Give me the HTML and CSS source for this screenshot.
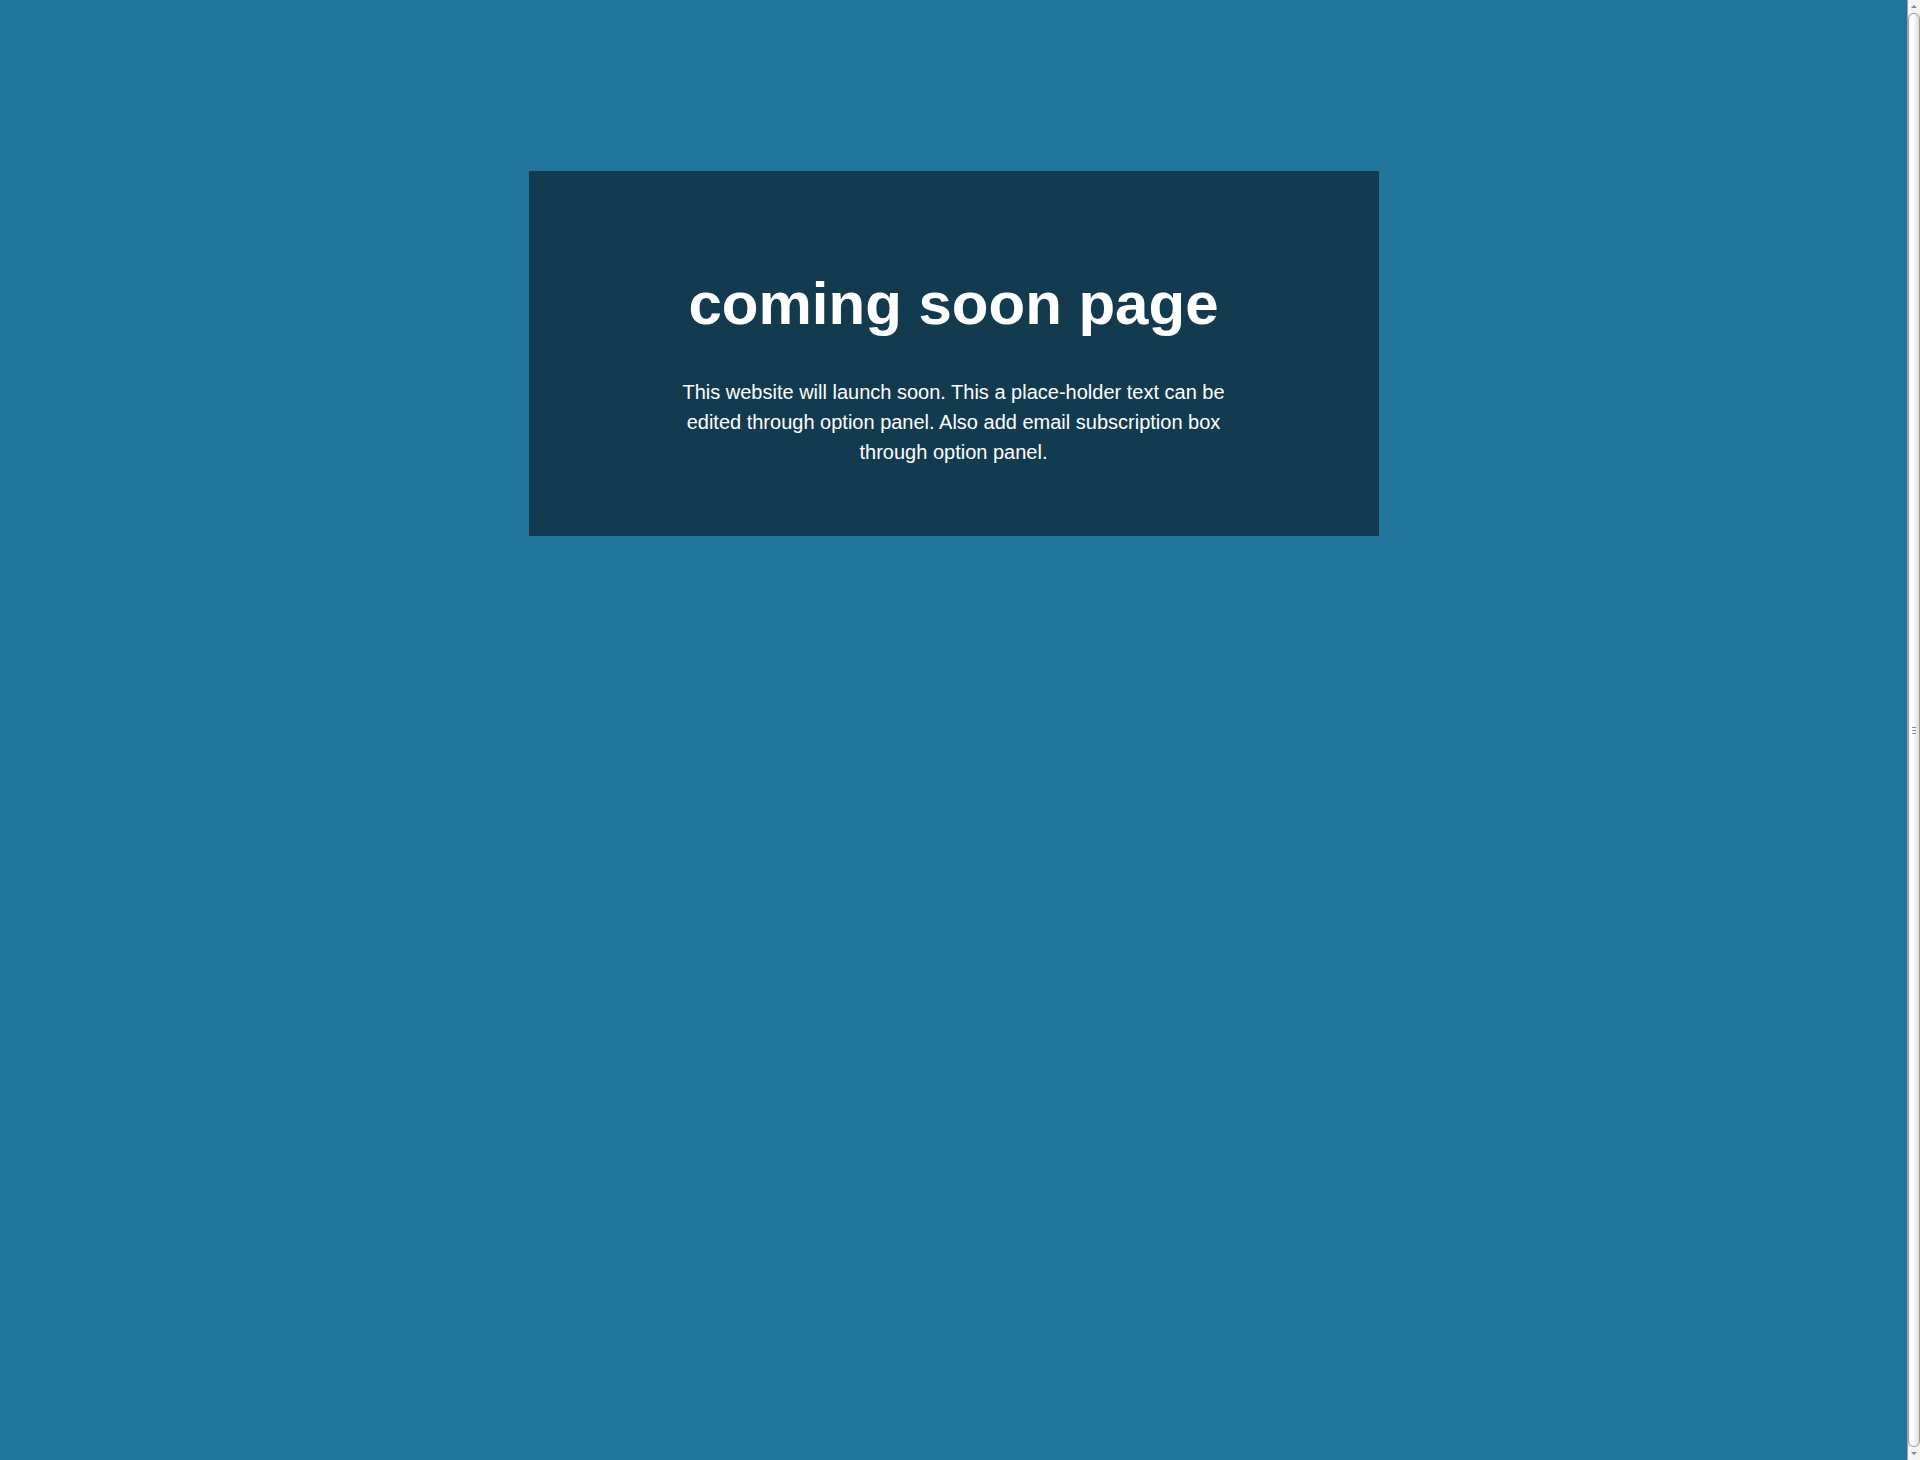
FILE: index.html
```html
<!DOCTYPE html>
<html lang="en">
<head>
<meta charset="utf-8">
<title>Coming soon</title>
<link rel="stylesheet" href="styles.css">
</head>
<body>
<main class="page">
  <section class="notice">
    <h1 class="notice-title">coming soon page</h1>
    <p class="notice-text">This website will launch soon. This a place-holder text can be edited through option panel. Also add email subscription box through option panel.</p>
  </section>
</main>
<div class="scrollbar" aria-hidden="true">
  <div class="sb-btn sb-up"><span class="sb-arrow-up"></span></div>
  <div class="sb-thumb"><span class="sb-grip"></span></div>
  <div class="sb-btn sb-down"><span class="sb-arrow-down"></span></div>
</div>
</body>
</html>
```

FILE: styles.css
```css
html {
  background: #21759b;
}
body {
  margin: 0;
  height: 100vh;
  overflow: hidden;
  display: flex;
  font-family: "Liberation Sans", Arial, sans-serif;
  color: #ffffff;
}
.page {
  flex: 1;
  display: flex;
  justify-content: center;
  align-items: flex-start;
  padding-top: 171px;
}
.notice {
  width: 850px;
  box-sizing: border-box;
  background: #123b50;
  padding: 97px 0 69px;
  display: flex;
  flex-direction: column;
  align-items: center;
  text-align: center;
}
.notice-title {
  margin: 0;
  font-size: 60px;
  line-height: 72px;
  font-weight: bold;
}
.notice-text {
  margin: 37px 0 0;
  width: 580px;
  font-size: 20px;
  line-height: 30px;
}
.scrollbar {
  width: 13px;
  height: 100vh;
  box-sizing: border-box;
  background: #ececec;
  border-left: 1px solid #a0a0a0;
  display: flex;
  flex-direction: column;
}
.sb-btn {
  height: 13px;
  flex: none;
  display: flex;
  align-items: center;
  justify-content: center;
  background: #f4f4f4;
}
.sb-arrow-up {
  width: 0;
  height: 0;
  border-left: 3px solid transparent;
  border-right: 3px solid transparent;
  border-bottom: 3px solid #8a8a8a;
}
.sb-arrow-down {
  width: 0;
  height: 0;
  border-left: 3px solid transparent;
  border-right: 3px solid transparent;
  border-top: 3px solid #8a8a8a;
}
.sb-thumb {
  flex: 1;
  margin: 0 0 0 0;
  border: 1px solid #9a9a9a;
  border-radius: 6px;
  background: linear-gradient(to right, #f7f7f7, #ffffff 40%, #dcdcdc);
  display: flex;
  align-items: center;
  justify-content: center;
}
.sb-grip {
  width: 4px;
  height: 5px;
  border-top: 1px solid #8a8a8a;
  border-bottom: 1px solid #8a8a8a;
  position: relative;
}
.sb-grip::after {
  content: "";
  position: absolute;
  left: 0;
  right: 0;
  top: 2px;
  height: 1px;
  background: #8a8a8a;
}
```
